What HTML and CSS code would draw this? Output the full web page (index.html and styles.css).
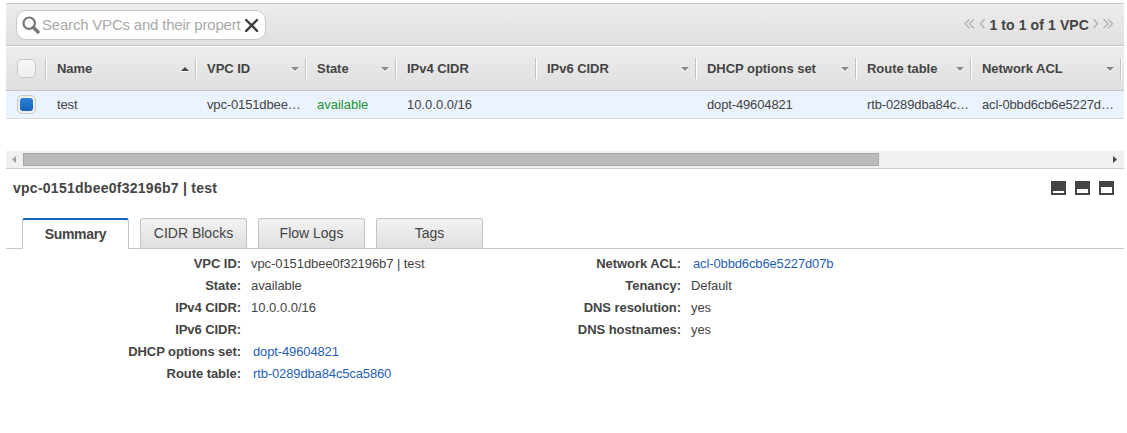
FILE: index.html
```html
<!DOCTYPE html>
<html lang="en">
<head>
<meta charset="utf-8">
<title>VPC</title>
<link rel="stylesheet" href="styles.css">
</head>
<body>
<main class="console">
  <div class="toolbar">
    <div class="search">
      <svg class="search-icon" width="18" height="18" viewBox="0 0 18 18"><circle cx="7.2" cy="7.2" r="5.7" fill="none" stroke="#777" stroke-width="2.2"/><path d="M11.2 11.2L16 16" stroke="#777" stroke-width="3.4" stroke-linecap="round"/></svg>
      <span class="placeholder">Search VPCs and their propert</span>
      <svg class="clear-icon" width="14" height="14" viewBox="0 0 14 14"><path d="M1.2 2L12 12.8M12 2L1.2 12.8" stroke="#3c3c3c" stroke-width="2.4" stroke-linecap="round"/></svg>
    </div>
    <div class="pager">
      <svg width="22" height="11" viewBox="0 0 22 11"><path d="M5.5 .2L1 4.7L5.5 9.2M10 .2L5.5 4.7L10 9.2M20.5 .2L16.5 4.7L20.5 9.2" fill="none" stroke="#b5b5b5" stroke-width="1.5"/></svg>
      <span class="pager-text">1 to 1 of 1 VPC</span>
      <svg width="22" height="11" viewBox="0 0 22 11"><path d="M1.5 .2L5.5 4.7L1.5 9.2M11.5 .2L16 4.7L11.5 9.2M16 .2L20.5 4.7L16 9.2" fill="none" stroke="#b5b5b5" stroke-width="1.5"/></svg>
    </div>
  </div>

  <div class="grid head">
    <div class="th pick"><span class="checkbox"></span></div>
    <div class="th"><span class="label">Name</span><i class="caret up"></i></div>
    <div class="th"><span class="label">VPC ID</span><i class="caret"></i></div>
    <div class="th"><span class="label">State</span><i class="caret"></i></div>
    <div class="th"><span class="label">IPv4 CIDR</span></div>
    <div class="th"><span class="label">IPv6 CIDR</span><i class="caret"></i></div>
    <div class="th"><span class="label">DHCP options set</span><i class="caret"></i></div>
    <div class="th"><span class="label">Route table</span><i class="caret"></i></div>
    <div class="th"><span class="label">Network ACL</span><i class="caret"></i></div>
  </div>
  <div class="grid row">
    <div class="td pick"><span class="checkbox checked"></span></div>
    <div class="td">test</div>
    <div class="td">vpc-0151dbee…</div>
    <div class="td ok">available</div>
    <div class="td ip">10.0.0.0/16</div>
    <div class="td"></div>
    <div class="td">dopt-49604821</div>
    <div class="td">rtb-0289dba84c…</div>
    <div class="td">acl-0bbd6cb6e5227d…</div>
  </div>

  <div class="scrollbar">
    <svg width="17" height="17" viewBox="0 0 17 17"><path d="M10 5V12L6 8.5Z" fill="#a0a0a0"/></svg>
    <div class="track"><div class="thumb"></div></div>
    <svg width="17" height="17" viewBox="0 0 17 17"><path d="M6 5V12L10 8.5Z" fill="#444"/></svg>
  </div>

  <div class="detail-head">
    <h1 class="title">vpc-0151dbee0f32196b7 | test</h1>
    <div class="layouts"><i class="layout small"></i><i class="layout medium"></i><i class="layout large"></i></div>
  </div>

  <nav class="tabs">
    <a class="tab active">Summary</a>
    <a class="tab">CIDR Blocks</a>
    <a class="tab">Flow Logs</a>
    <a class="tab">Tags</a>
  </nav>

  <div class="details">
    <dl class="props">
      <dt>VPC ID:</dt><dd>vpc-0151dbee0f32196b7 | test</dd>
      <dt>State:</dt><dd>available</dd>
      <dt>IPv4 CIDR:</dt><dd class="ip">10.0.0.0/16</dd>
      <dt>IPv6 CIDR:</dt><dd></dd>
      <dt>DHCP options set:</dt><dd class="link">dopt-49604821</dd>
      <dt>Route table:</dt><dd class="link">rtb-0289dba84c5ca5860</dd>
    </dl>
    <dl class="props">
      <dt>Network ACL:</dt><dd class="link">acl-0bbd6cb6e5227d07b</dd>
      <dt>Tenancy:</dt><dd>Default</dd>
      <dt>DNS resolution:</dt><dd>yes</dd>
      <dt>DNS hostnames:</dt><dd>yes</dd>
    </dl>
  </div>
</main>
</body>
</html>
```
FILE: styles.css
```css
* { box-sizing: border-box; }
body {
  margin: 0;
  background: #fff;
  color: #444;
  font: 13px/16px "Liberation Sans", Arial, sans-serif;
  overflow: hidden;
}
svg { display: block; flex: none; }
.console { width: 1118px; margin: 3px 0 0 6px; }

.toolbar {
  display: flex;
  align-items: center;
  justify-content: space-between;
  height: 43px;
  padding: 0 10px;
  border-top: 1px solid #c8c8c8;
  border-bottom: 1px solid #c4c4c4;
  background: linear-gradient(#ededed, #dfdfdf);
}
.search {
  display: flex;
  align-items: center;
  width: 250px;
  height: 30px;
  padding: 0 6px 0 5px;
  border: 1px solid #c8c8c8;
  border-radius: 10px;
  background: #fff;
}
.placeholder {
  flex: 1;
  min-width: 0;
  margin: 0 4px 0 2px;
  white-space: nowrap;
  font-size: 15px;
  letter-spacing: -.2px;
  line-height: 20px;
  color: #a9a9a9;
}
.pager { display: flex; align-items: center; gap: 3px; }
.pager-text { font-weight: bold; font-size: 14px; letter-spacing: .1px; white-space: nowrap; padding-top: 1px; }

.grid {
  display: grid;
  grid-template-columns: 40px 150px 110px 90px 140px 160px 160px 115px 150px;
}
.head {
  height: 44px;
  margin-top: 1px;
  align-items: center;
  border-bottom: 1px solid #c4c4c4;
  background: linear-gradient(#ededed, #dfdfdf);
}
.th {
  display: flex;
  align-items: center;
  height: 21px;
  padding: 0 6px 0 11px;
  border-right: 1px solid #c2c2c2;
  box-shadow: 1px 0 #fff;
}
.label { flex: 1; font-weight: bold; white-space: nowrap; letter-spacing: -.04px; }
.caret {
  border: 4px solid transparent;
  border-top-color: #888;
  border-bottom: 0;
  filter: drop-shadow(0 1px 0 #fff);
}
.caret.up { border-top: 0; border-bottom: 4px solid #444; }
.pick.pick { padding: 0 0 0 11px; }
.checkbox {
  display: block;
  flex: none;
  width: 19px;
  height: 19px;
  border: 1px solid #c8c8c8;
  border-radius: 5px;
  background: linear-gradient(#f6f6f6, #efefef);
}
.checked {
  padding: 2px;
  background: #f1f1f1;
}
.checked::before {
  content: "";
  display: block;
  height: 13px;
  border-radius: 3px;
  background: linear-gradient(#2d84d8, #1463bb);
}
.row {
  height: 28px;
  align-items: center;
  border-bottom: 1px solid #d9d9d9;
  background: #eaf3fe;
}
.td { padding-left: 11px; white-space: nowrap; letter-spacing: -.14px; }
.ok { color: #1d9535; letter-spacing: 0; }
.td.ip, dd.ip { letter-spacing: 0; }

.scrollbar {
  display: flex;
  height: 18px;
  margin-top: 32px;
  border-bottom: 1px solid #ccc;
  background: #f0f0f0;
}
.track { flex: 1; padding: 2px 0; }
.thumb { width: 856px; height: 13px; border: 1px solid #a6a6a6; background: #bbb; }

.detail-head {
  display: flex;
  align-items: center;
  justify-content: space-between;
  height: 38px;
  padding: 0 10px 0 7px;
}
.title { margin: 0; font-size: 14px; letter-spacing: .26px; }
.layouts { display: flex; gap: 9px; }
.layout { width: 15px; height: 14px; border: 2px solid #444; background: #fff; }
.small { border-top-width: 10px; }
.medium { border-top-width: 8px; }
.large { border-top-width: 6px; }

.tabs {
  display: flex;
  align-items: flex-end;
  gap: 11px;
  height: 42px;
  padding-left: 16px;
  border-bottom: 1px solid #c8c8c8;
}
.tab {
  width: 107px;
  height: 30px;
  border: 1px solid #c4c4c4;
  border-bottom: 0;
  border-radius: 3px 3px 0 0;
  background: linear-gradient(#f3f3f3, #dfdfdf);
  font-size: 14px;
  line-height: 29px;
  text-align: center;
}
.tab.active {
  height: 31px;
  margin-bottom: -1px;
  border-top: 2px solid #1166bb;
  background: #fff;
  font-weight: bold;
  letter-spacing: -.3px;
  line-height: 28px;
}

.details { display: flex; }
.props {
  display: grid;
  grid-template-columns: 235px 205px;
  grid-auto-rows: 22px;
  column-gap: 10px;
  margin: 4px 0 0;
  align-content: start;
  line-height: 22px;
  white-space: nowrap;
}
.props + .props { margin-left: -10px; }
dt { font-weight: bold; text-align: right; letter-spacing: -.06px; }
dd { margin: 0; letter-spacing: -.07px; }
.link { padding-left: 2px; color: #1f5fb8; letter-spacing: -.13px; }
```
